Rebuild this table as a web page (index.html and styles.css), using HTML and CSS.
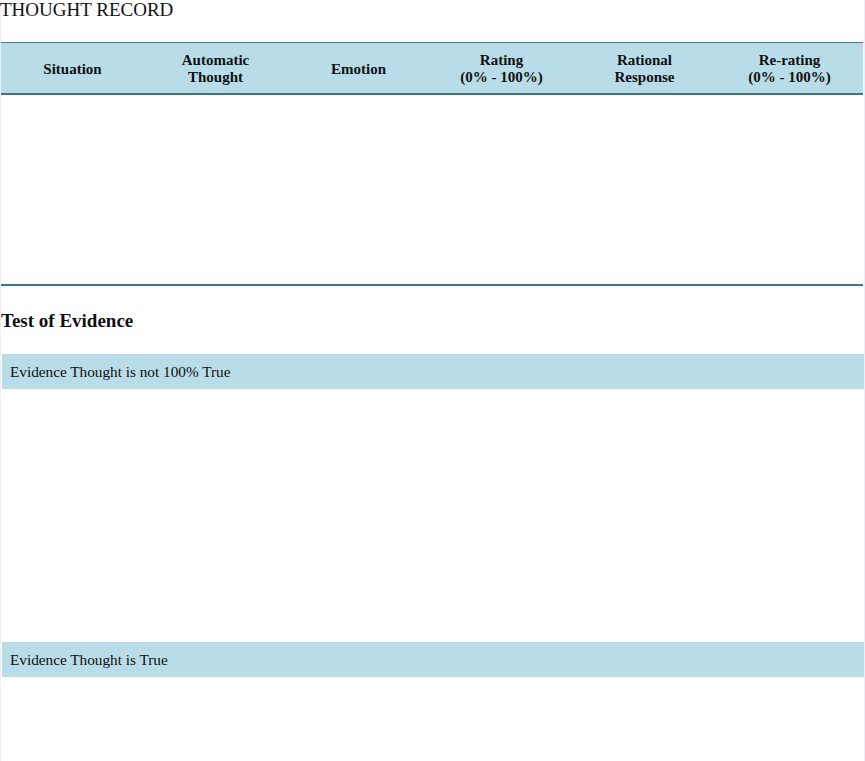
FILE: index.html
```html
<!DOCTYPE html>
<html>
<head>
<meta charset="utf-8">
<link rel="stylesheet" href="styles.css">
</head>
<body>
<div class="page">
  <h1 class="title">THOUGHT RECORD</h1>
  <table class="record">
    <colgroup>
      <col class="col-std"><col class="col-std"><col class="col-std"><col class="col-std"><col class="col-std"><col class="col-last">
    </colgroup>
    <thead>
      <tr>
        <th>Situation</th>
        <th>Automatic<br>Thought</th>
        <th>Emotion</th>
        <th>Rating<br>(0% - 100%)</th>
        <th>Rational<br>Response</th>
        <th>Re-rating<br>(0% - 100%)</th>
      </tr>
    </thead>
    <tbody>
      <tr>
        <td></td><td></td><td></td><td></td><td></td><td></td>
      </tr>
    </tbody>
  </table>
  <h3 class="section-title">Test of Evidence</h3>
  <div class="evidence-bar">Evidence Thought is not 100% True</div>
  <div class="evidence-space"></div>
  <div class="evidence-bar">Evidence Thought is True</div>
  <div class="evidence-space"></div>
</div>
</body>
</html>
```
FILE: styles.css
```css
html, body {
  margin: 0;
  padding: 0;
  background: #ffffff;
}
body {
  font-family: "Liberation Serif", "Times New Roman", serif;
  color: #111111;
}
.page {
  width: 863px;
  border-left: 1px solid #e9f0f8;
  border-right: 1px solid #e9f0f8;
  min-height: 761px;
}
.title {
  margin: 0 0 0 -1px;
  font-size: 19px;
  font-weight: normal;
  line-height: 19px;
  height: 19px;
}
.record {
  margin-top: 23px;
  width: 862px;
  border-collapse: collapse;
  table-layout: fixed;
}
.col-std {
  width: 143px;
}
.col-last {
  width: 147px;
}
.record thead tr {
  background: #b8dde8;
  border-top: 1px solid #4a7c89;
  border-bottom: 2px solid #3d7282;
}
.record th {
  height: 48px;
  padding: 2px 0 0 0;
  font-size: 15px;
  line-height: 17px;
  font-weight: bold;
  text-align: center;
  vertical-align: middle;
}
.record tbody tr {
  border-bottom: 2px solid #3d7282;
}
.record td {
  height: 189px;
  padding: 0;
}
.section-title {
  margin: 25px 0 0 0;
  font-size: 19px;
  line-height: 20px;
  font-weight: bold;
  height: 20px;
}
.evidence-bar {
  margin-top: 23px;
  margin-left: 1px;
  height: 35px;
  background: #b8dde8;
  font-size: 15.25px;
  line-height: 35px;
  padding-left: 8px;
}
.evidence-space {
  height: 253px;
  margin-bottom: -23px;
}
```
